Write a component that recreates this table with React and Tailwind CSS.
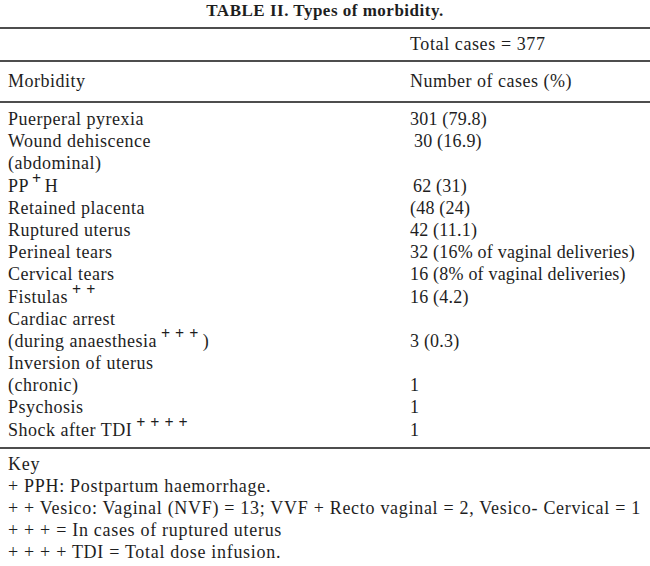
const rows = [
  { label: 'Puerperal pyrexia', value: '301 (79.8)' },
  { label: 'Wound dehiscence', value: '30 (16.9)', indent: 'pl-[4px]' },
  { label: '(abdominal)', value: '' },
  { label: <>PP<sup className="mx-[3px] text-[16px] font-bold">+</sup>H</>, value: '62 (31)', indent: 'pl-[3px]' },
  { label: 'Retained placenta', value: '(48 (24)' },
  { label: 'Ruptured uterus', value: '42 (11.1)' },
  { label: 'Perineal tears', value: '32 (16% of vaginal deliveries)' },
  { label: 'Cervical tears', value: '16 (8% of vaginal deliveries)' },
  { label: <>Fistulas<sup className="ml-[4px] text-[16px] font-semibold">+ +</sup></>, value: '16 (4.2)' },
  { label: 'Cardiac arrest', value: '' },
  { label: <>(during anaesthesia<sup className="mx-[4px] text-[16px] font-semibold">+ + +</sup>)</>, value: '3 (0.3)' },
  { label: 'Inversion of uterus', value: '' },
  { label: '(chronic)', value: '1' },
  { label: 'Psychosis', value: '1' },
  { label: <>Shock after TDI<sup className="ml-[4px] text-[16px] font-semibold">+ + + +</sup></>, value: '1' },
]

const keyLines = [
  'Key',
  '+ PPH: Postpartum haemorrhage.',
  '+ + Vesico: Vaginal (NVF) = 13; VVF + Recto vaginal = 2, Vesico- Cervical = 1',
  '+ + + = In cases of ruptured uterus',
  '+ + + + TDI = Total dose infusion.',
]

const Rule = () => <div className="h-[2px] bg-[#4d4d4d]" />

export default function App() {
  return (
    <div
      className="w-[650px] h-[566px] bg-white text-[#1e1e1e] overflow-hidden"
      style={{ fontFamily: '"Liberation Serif", "Times New Roman", serif' }}
    >
      <div className="h-[27px] pt-[1px] text-center text-[17px] leading-[20px] font-bold tracking-[0.5px]">
        TABLE II. Types of morbidity.
      </div>
      <Rule />

      <div className="h-[31px] grid grid-cols-[410px_1fr] items-center text-[18px] tracking-[0.6px]">
        <div />
        <div>Total cases = 377</div>
      </div>
      <Rule />

      <div className="h-[39px] grid grid-cols-[410px_1fr] items-center text-[18px] tracking-[0.5px]">
        <div className="pl-[8px]">Morbidity</div>
        <div>Number of cases (%)</div>
      </div>
      <Rule />

      <div className="pt-[5px] pb-[6px] text-[18px] leading-[22.2px]">
        {rows.map((r, i) => (
          <div key={i} className="grid grid-cols-[410px_1fr] h-[22.2px]">
            <div className="pl-[8px] whitespace-nowrap tracking-[0.5px]">{r.label}</div>
            <div className={`whitespace-nowrap tracking-[0.2px] ${r.indent || ''}`}>{r.value}</div>
          </div>
        ))}
      </div>
      <Rule />

      <div className="pt-[4px] pl-[8px] text-[18px] leading-[22px] tracking-[0.7px]">
        {keyLines.map((l, i) => (
          <div key={i} className="whitespace-nowrap">{l}</div>
        ))}
      </div>
    </div>
  )
}
